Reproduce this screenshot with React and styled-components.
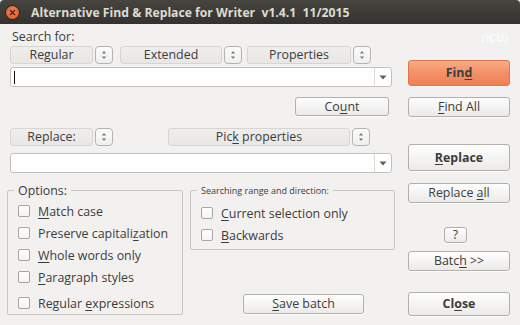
import React from 'react';
import styled, { createGlobalStyle, css } from 'styled-components';

const GlobalStyle = createGlobalStyle`
  html, body {
    margin: 0;
    padding: 0;
    background: #f2f1f0;
  }
  * {
    box-sizing: border-box;
  }
`;

const Window = styled.div`
  width: 520px;
  height: 325px;
  display: flex;
  flex-direction: column;
  background: #f2f1f0;
  font-family: "Open Sans", "Noto Sans", sans-serif;
  font-size: 12.4px;
  color: #3c3c3c;
  overflow: hidden;
`;

const TitleBar = styled.div`
  height: 24px;
  flex: none;
  display: flex;
  align-items: center;
  padding-left: 6px;
  gap: 12px;
  background: linear-gradient(#46453f, #3b3a36 60%, #33322e);
  border-radius: 4px 4px 0 0;
`;

const CloseDot = styled.div`
  width: 13px;
  height: 13px;
  border-radius: 50%;
  background: radial-gradient(circle at 50% 35%, #f37d53, #df5a2d);
  box-shadow: 0 0 0 1px #2a2926;
  display: flex;
  align-items: center;
  justify-content: center;
`;

const Title = styled.div`
  font-weight: bold;
  font-size: 12.2px;
  color: #dfdbd2;
  white-space: pre;
`;

const Body = styled.div`
  flex: 1;
  display: flex;
  padding: 0 10px 0 7px;
`;

const LeftCol = styled.div`
  width: 388px;
  display: flex;
  flex-direction: column;
`;

const RightCol = styled.div`
  width: 102px;
  margin-left: 13px;
  display: flex;
  flex-direction: column;
`;

const FieldLabel = styled.div`
  height: 16px;
  line-height: 16px;
  margin: 5px 0 0 5px;
`;

const Row = styled.div`
  display: flex;
  align-items: center;
  margin-top: ${p => p.$mt || 0}px;
  margin-left: ${p => p.$ml || 0}px;
  justify-content: ${p => p.$justify || 'flex-start'};
  padding-right: ${p => p.$pr || 0}px;
`;

const SelectBox = styled.div`
  width: ${p => p.$w}px;
  height: 18px;
  display: flex;
  align-items: center;
  justify-content: center;
  background: linear-gradient(#efeeec, #e8e7e5);
  border: 1px solid #d8d5d1;
  border-radius: 3px;
  line-height: 16px;
  padding-bottom: 1px;
`;

const SpinBox = styled.div`
  width: 18px;
  height: 18px;
  margin-left: 2px;
  margin-right: ${p => p.$mr || 0}px;
  display: flex;
  align-items: center;
  justify-content: center;
  background: linear-gradient(#fbfbfb, #f0efee);
  border: 1px solid #b6b3ae;
  border-radius: 4px;
`;

const Combo = styled.div`
  width: 382px;
  height: 20px;
  margin-top: ${p => p.$mt}px;
  margin-left: 3px;
  display: flex;
  background: #fff;
  border: 1px solid #c4c1bc;
  border-radius: 3px;
`;

const ComboText = styled.div`
  flex: 1;
  display: flex;
  align-items: center;
  padding-left: 3px;
`;

const Caret = styled.span`
  width: 1px;
  height: 13px;
  background: #111;
`;

const ComboArrow = styled.div`
  width: 17px;
  border-left: 1px solid #dedbd7;
  display: flex;
  align-items: center;
  justify-content: center;
`;

const Button = styled.div`
  width: ${p => p.$w || 102}px;
  height: ${p => p.$h || 20}px;
  margin-top: ${p => p.$mt || 0}px;
  margin-left: ${p => p.$ml || 0}px;
  display: flex;
  align-items: center;
  justify-content: center;
  background: linear-gradient(#fefefe, #f3f2f1 60%, #ebeae8);
  border: 1px solid #b3b0ab;
  border-radius: 3px;
  box-shadow: 0 1px 0 rgba(255, 255, 255, 0.8);
  font-weight: ${p => (p.$bold ? 'bold' : 'normal')};
  padding-bottom: 1px;
  ${p =>
    p.$accent &&
    css`
      background: linear-gradient(#f8ab88, #f39066 50%, #ef8256);
      border-color: #dc774c;
    `}
`;

const U = styled.span`
  text-decoration: underline;
  text-underline-offset: 2px;
  text-decoration-thickness: 1px;
`;

const Icu = styled.div`
  height: 14px;
  margin-top: 7px;
  text-align: right;
  padding-right: 2px;
  font-size: 11px;
  font-weight: bold;
  line-height: 14px;
  color: #fbfbfb;
`;

const GroupsRow = styled.div`
  display: flex;
  gap: 7px;
  margin-top: 17px;
`;

const Group = styled.div`
  position: relative;
  width: ${p => p.$w}px;
  height: ${p => p.$h}px;
  border: 1px solid #c9c6c1;
  border-radius: 2px;
  padding: ${p => p.$pt}px 0 0 10px;
  display: flex;
  flex-direction: column;
`;

const Legend = styled.div`
  position: absolute;
  top: ${p => (p.$small ? -7 : -8)}px;
  left: 6px;
  padding: 0 4px;
  background: #f2f1f0;
  font-size: ${p => (p.$small ? 9 : 12.4)}px;
  line-height: ${p => (p.$small ? 13 : 15)}px;
`;

const CheckRow = styled.label`
  height: 22px;
  display: flex;
  align-items: center;
  gap: 8px;
  margin-top: ${p => p.$mt || 0}px;
`;

const Box = styled.span`
  width: 12px;
  height: 12px;
  flex: none;
  background: linear-gradient(#ffffff, #f4f3f2);
  border: 1px solid #a9a6a1;
  border-radius: 2px;
`;

const RangeCol = styled.div`
  display: flex;
  flex-direction: column;
`;

const SpinIcon = () => (
  <svg width="8" height="12" viewBox="0 0 8 12">
    <path d="M4 2 L6 4.5 L2 4.5 Z" fill="#777" />
    <path d="M4 10 L6 7.5 L2 7.5 Z" fill="#777" />
  </svg>
);

const Spin = props => (
  <SpinBox {...props}>
    <SpinIcon />
  </SpinBox>
);

const DownArrow = () => (
  <svg width="8" height="5" viewBox="0 0 8 5">
    <path d="M0.5 0.5 L7.5 0.5 L4 4.5 Z" fill="#5e5e5e" />
  </svg>
);

const Check = ({ children, mt }) => (
  <CheckRow $mt={mt}>
    <Box />
    <span>{children}</span>
  </CheckRow>
);

export default function App() {
  return (
    <Window>
      <GlobalStyle />
      <TitleBar>
        <CloseDot>
          <svg width="7" height="7" viewBox="0 0 7 7">
            <path d="M1 1 L6 6 M6 1 L1 6" stroke="#4a2114" strokeWidth="1.3" />
          </svg>
        </CloseDot>
        <Title>{'Alternative Find & Replace for Writer  v1.4.1  11/2015'}</Title>
      </TitleBar>
      <Body>
        <LeftCol>
          <FieldLabel>Search for:</FieldLabel>
          <Row $mt={1} $ml={3}>
            <SelectBox $w={83}>Regular</SelectBox>
            <Spin $mr={7} />
            <SelectBox $w={102}>Extended</SelectBox>
            <Spin $mr={5} />
            <SelectBox $w={104}>Properties</SelectBox>
            <Spin />
          </Row>
          <Combo $mt={3}>
            <ComboText>
              <Caret />
            </ComboText>
            <ComboArrow>
              <DownArrow />
            </ComboArrow>
          </Combo>
          <Row $mt={10} $justify="flex-end" $pr={6}>
            <Button $w={94} $h={19}>
              Co<U>u</U>nt
            </Button>
          </Row>
          <Row $mt={12} $ml={3}>
            <SelectBox $w={83}>Replace:</SelectBox>
            <Spin $mr={55} />
            <SelectBox $w={182}>
              <span>
                Pic<U>k</U> properties
              </span>
            </SelectBox>
            <Spin />
          </Row>
          <Combo $mt={7}>
            <ComboText />
            <ComboArrow>
              <DownArrow />
            </ComboArrow>
          </Combo>
          <GroupsRow>
            <Group $w={176} $h={125} $pt={9}>
              <Legend>Options:</Legend>
              <Check>
                <U>M</U>atch case
              </Check>
              <Check>
                Preserve capitali<U>z</U>ation
              </Check>
              <Check>
                <U>W</U>hole words only
              </Check>
              <Check>
                <U>P</U>aragraph styles
              </Check>
              <Check mt={4}>
                Regular <U>e</U>xpressions
              </Check>
            </Group>
            <RangeCol>
              <Group $w={205} $h={60} $pt={11}>
                <Legend $small>Searching range and direction:</Legend>
                <Check>
                  <U>C</U>urrent selection only
                </Check>
                <Check>
                  <U>B</U>ackwards
                </Check>
              </Group>
              <Button $w={121} $mt={44} $ml={53}>
                <span>
                  <U>S</U>ave batch
                </span>
              </Button>
            </RangeCol>
          </GroupsRow>
        </LeftCol>
        <RightCol>
          <Icu>(ICU)</Icu>
          <Button $accent $bold $h={26} $mt={15}>
            <span>
              Fin<U>d</U>
            </span>
          </Button>
          <Button $mt={11}>
            <span>
              <U>F</U>ind All
            </span>
          </Button>
          <Button $bold $h={27} $mt={27}>
            <span>
              <U>R</U>eplace
            </span>
          </Button>
          <Button $mt={12}>
            <span>
              Replace <U>a</U>ll
            </span>
          </Button>
          <Button $w={23} $h={16} $mt={24} $ml={36}>
            ?
          </Button>
          <Button $mt={8}>
            <span>
              Batc<U>h</U> &gt;&gt;
            </span>
          </Button>
          <Button $bold $h={24} $mt={21}>
            <span>
              Cl<U>o</U>se
            </span>
          </Button>
        </RightCol>
      </Body>
    </Window>
  );
}
